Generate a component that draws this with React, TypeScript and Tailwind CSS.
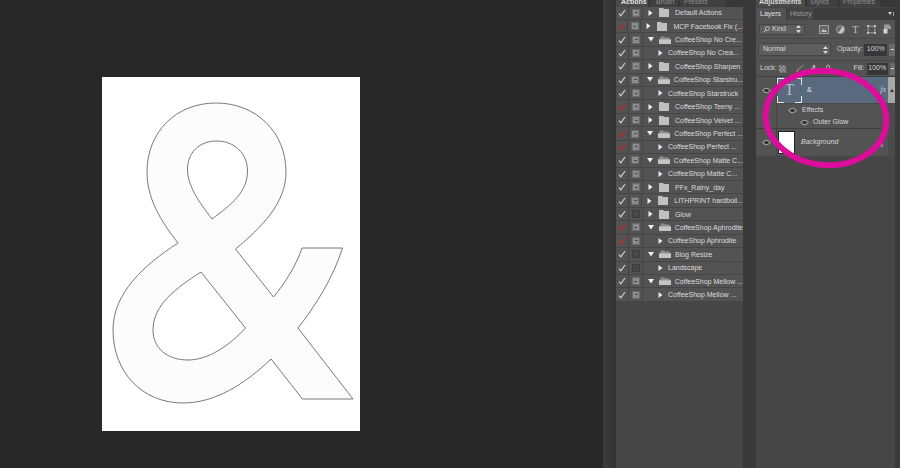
const actions = [
  { name: "Default Actions", kind: "closed" },
  { name: "MCP Facebook Fix (...", kind: "closed", red: true },
  { name: "CoffeeShop No Cre...", kind: "open" },
  { name: "CoffeeShop No Crea...", kind: "item" },
  { name: "CoffeeShop Sharpen", kind: "closed" },
  { name: "CoffeeShop Starstru...", kind: "open" },
  { name: "CoffeeShop Starstruck", kind: "item" },
  { name: "CoffeeShop Teeny ...", kind: "closed", red: true },
  { name: "CoffeeShop Velvet ...", kind: "closed" },
  { name: "CoffeeShop Perfect ...", kind: "open", red: true },
  { name: "CoffeeShop Perfect ...", kind: "item", red: true },
  { name: "CoffeeShop Matte C...", kind: "open" },
  { name: "CoffeeShop Matte C...", kind: "item" },
  { name: "PFx_Rainy_day", kind: "closed" },
  { name: "LITHPRINT hardboil...", kind: "closed" },
  { name: "Glow", kind: "closed", empty: true },
  { name: "CoffeeShop Aphrodite", kind: "open", red: true },
  { name: "CoffeeShop Aphrodite", kind: "item", red: true },
  { name: "Blog Resize", kind: "open", empty: true },
  { name: "Landscape", kind: "item", empty: true },
  { name: "CoffeeShop Mellow ...", kind: "open" },
  { name: "CoffeeShop Mellow ...", kind: "item" },
];

function CheckMark({ red }: { red?: boolean }) {
  return (
    <svg width="8" height="8" viewBox="0 0 8 8" fill="none">
      <path d="M1 4.6 L2.8 6.8 L7 1" stroke={red ? "#d8232a" : "#d6d6d6"} strokeWidth="1.1" />
    </svg>
  );
}

function Folder({ open }: { open: boolean }) {
  if (open) {
    return (
      <svg width="12" height="8" viewBox="0 0 12 8">
        <path d="M1.5 0.5 H5 L6 1.5 H10.5 V3 H1.5 Z" fill="#8f8f8f" />
        <path d="M0 3.2 H12 V8 H0 Z" fill="#c4c4c4" />
      </svg>
    );
  }
  return (
    <svg width="10" height="9" viewBox="0 0 10 9">
      <path d="M0 0 H4 L5 1 H10 V9 H0 Z" fill="#c0c0c0" />
    </svg>
  );
}

function Eye({ className }: { className?: string }) {
  return (
    <svg width="9" height="7" viewBox="0 0 9 7" className={className} fill="none">
      <path d="M0.5 3.5 Q4.5 -1 8.5 3.5 Q4.5 8 0.5 3.5 Z" stroke="#b4b4b4" strokeWidth="0.9" />
      <circle cx="4.5" cy="3.5" r="1.6" fill="#2f2f2f" />
    </svg>
  );
}

function MenuGlyph() {
  return (
    <svg width="6" height="4" viewBox="0 0 6 4">
      <path d="M0 0 H4 L2 3 Z" fill="#d0d0d0" />
      <path d="M5 0 H6 V4 H5 Z" fill="#9a9a9a" />
    </svg>
  );
}

function Stepper() {
  return (
    <svg width="5" height="8" viewBox="0 0 5 8">
      <path d="M2.5 0 L5 3 H0 Z M0 5 H5 L2.5 8 Z" fill="#d8d8d8" />
    </svg>
  );
}

function ActionRow({ a }: { a: (typeof actions)[number] }) {
  return (
    <div className="h-[13.43px] flex items-stretch bg-[#535353] border-b border-[#454545]">
      <div className="w-[13px] flex items-center justify-center border-r border-[#454545] mr-[1px]">
        <CheckMark red={a.red} />
      </div>
      <div className="w-[13px] flex items-center justify-center border-r border-[#454545]">
        {a.empty ? (
          <div className="w-[8px] h-[8px] bg-[#474747] border border-[#3d3d3d]" />
        ) : (
          <div className="w-[8px] h-[8px] bg-[#8c8c8c] border border-[#6a6a6a] flex items-center justify-center">
            <div className="w-[3px] h-[1px] bg-[#4c4c4c]" />
          </div>
        )}
      </div>
      {a.kind === "item" ? (
        <div className="flex items-center pl-[15px]">
          <svg width="5" height="6" viewBox="0 0 5 6" className="mr-[5px]">
            <path d="M0.5 0 L4.5 3 L0.5 6 Z" fill="#e8e8e8" />
          </svg>
          <span className="text-[7px] leading-none text-[#dcdcdc] whitespace-nowrap">{a.name}</span>
        </div>
      ) : (
        <div className="flex items-center pl-[5px]">
          <div className="w-[11px] flex items-center">
            {a.kind === "open" ? (
              <svg width="6" height="5" viewBox="0 0 6 5">
                <path d="M0 0 H6 L3 4.5 Z" fill="#efefef" />
              </svg>
            ) : (
              <svg width="5" height="6" viewBox="0 0 5 6">
                <path d="M0.5 0 L4.5 3 L0.5 6 Z" fill="#efefef" />
              </svg>
            )}
          </div>
          <div className="w-[16px] flex items-center">
            <Folder open={a.kind === "open"} />
          </div>
          <span className="text-[7px] leading-none text-[#dcdcdc] whitespace-nowrap">{a.name}</span>
        </div>
      )}
    </div>
  );
}

function LayersPanel() {
  return (
    <div className="w-[139px] h-full bg-[#464646] flex flex-col text-[#d8d8d8]">
      <div className="h-[7px] flex items-end overflow-hidden text-[7px] leading-none text-[#8f8f8f] bg-[#383838]">
        <div className="w-[49px] h-full bg-[#4a4a4a] flex items-end pl-[3px] pb-[2px] text-[#dcdcdc] font-bold">Adjustments</div>
        <div className="w-[31px] ml-[2px] h-full bg-[#404040] flex items-end pl-[3px] pb-[2px]">Styles</div>
        <div className="w-[40px] ml-[2px] h-full bg-[#404040] flex items-end pl-[3px] pb-[2px]">Properties</div>
      </div>
      <div className="h-[12px] mt-[1px] flex bg-[#3c3c3c] text-[7px] items-stretch">
        <div className="w-[30px] bg-[#535353] flex items-center pl-[4px] text-[#e0e0e0]">Layers</div>
        <div className="w-[27px] ml-[1px] bg-[#454545] flex items-center pl-[3px] text-[#9c9c9c]">History</div>
        <div className="flex-1 flex items-center justify-end pr-[1px]">
          <MenuGlyph />
        </div>
      </div>
      <div className="h-[57px] bg-[#535353] flex flex-col border-b border-[#3f3f3f]">
        <div className="h-[19px] flex items-center pl-[3px] border-b border-[#474747]">
          <div className="w-[46px] h-[11px] bg-[#5e5e5e] border border-[#454545] rounded-[1px] flex items-center px-[3px] gap-[2px]">
            <svg width="7" height="7" viewBox="0 0 7 7" fill="none">
              <circle cx="4.3" cy="2.7" r="2" stroke="#d0d0d0" strokeWidth="0.8" />
              <path d="M3 4 L0.8 6.2" stroke="#d0d0d0" strokeWidth="0.9" />
            </svg>
            <span className="text-[7px] flex-1">Kind</span>
            <Stepper />
          </div>
          <div className="flex items-center ml-[14px] gap-[7px]">
            <svg width="10" height="9" viewBox="0 0 10 9">
              <rect x="0.5" y="0.5" width="9" height="8" fill="#666" stroke="#b0b0b0" strokeWidth="0.8" />
              <path d="M2 7 L4 4 L5.5 5.5 L6.5 4.5 L8 7 Z" fill="#c8c8c8" />
            </svg>
            <svg width="9" height="9" viewBox="0 0 9 9">
              <circle cx="4.5" cy="4.5" r="4" fill="#6a6a6a" stroke="#b8b8b8" strokeWidth="0.7" />
              <path d="M6.5 1.2 A4 4 0 0 1 2.5 8 Z" fill="#c8c8c8" />
            </svg>
            <span className="text-[11px] leading-none font-['Liberation_Serif',serif] text-[#bcbcbc] w-[8px]">T</span>
            <svg width="9" height="9" viewBox="0 0 9 9" fill="none">
              <rect x="1.2" y="1.2" width="6.6" height="6.6" stroke="#a8a8a8" strokeWidth="0.9" />
              <path d="M0 0 H2 V2 H0 Z M7 0 H9 V2 H7 Z M0 7 H2 V9 H0 Z M7 7 H9 V9 H7 Z" fill="#c0c0c0" />
            </svg>
            <svg width="9" height="10" viewBox="0 0 9 10">
              <path d="M1 0.5 H6 L8 2.5 V5 H1 Z" fill="#9a9a9a" />
              <path d="M0.5 5 H4.5 V9.5 H0.5 Z" fill="#d4d4d4" />
            </svg>
          </div>
        </div>
        <div className="h-[22px] flex items-center pl-[2px] border-b border-[#474747]">
          <div className="w-[74px] h-[13px] bg-[#5e5e5e] border border-[#454545] rounded-[1px] flex items-center pl-[4px] pr-[2px] justify-between">
            <span className="text-[7px]">Normal</span>
            <Stepper />
          </div>
          <span className="text-[7px] ml-[6px] w-[28px]">Opacity:</span>
          <div className="w-[23px] h-[12px] bg-[#373737] flex items-center justify-center text-[7px]">100%</div>
          <div className="w-[6px] h-[12px] ml-[2px] bg-[#6a6a6a] flex items-center justify-center">
            <div className="w-[3px] h-[1px] bg-[#dddddd]" />
          </div>
        </div>
        <div className="flex-1 flex items-center pl-[4px]">
          <span className="text-[7px] w-[21px]">Lock:</span>
          <svg width="8" height="8" viewBox="0 0 8 8" className="mr-[9px]">
            <rect width="8" height="8" fill="#707070" />
            <path d="M0 0 H2 V2 H0 Z M4 0 H6 V2 H4 Z M2 2 H4 V4 H2 Z M6 2 H8 V4 H6 Z M0 4 H2 V6 H0 Z M4 4 H6 V6 H4 Z M2 6 H4 V8 H2 Z M6 6 H8 V8 H6 Z" fill="#999" />
          </svg>
          <svg width="10" height="9" viewBox="0 0 10 9" fill="none" className="mr-[6px]">
            <path d="M9.5 0.5 L3 6" stroke="#a0a0a0" strokeWidth="0.9" />
            <path d="M3 5.5 L1 8.5 L4 7 Z" fill="#b0b0b0" />
          </svg>
          <svg width="9" height="9" viewBox="0 0 9 9" className="mr-[7px]">
            <path d="M4.5 0 L6.5 2.5 H5.2 V4 H8 V6.5 H1 V4 H3.8 V2.5 H2.5 Z" fill="#c4c4c4" />
          </svg>
          <svg width="7" height="9" viewBox="0 0 7 9" fill="none">
            <path d="M1.8 4 V2.5 A1.7 1.7 0 0 1 5.2 2.5 V4" stroke="#c4c4c4" />
            <rect x="0.5" y="4" width="6" height="4.5" fill="#c4c4c4" />
          </svg>
          <span className="text-[7px] ml-[22px] w-[15px]">Fill:</span>
          <div className="w-[23px] h-[12px] bg-[#373737] flex items-center justify-center text-[7px]">100%</div>
          <div className="w-[6px] h-[12px] ml-[2px] bg-[#6a6a6a] flex items-center justify-center">
            <div className="w-[3px] h-[1px] bg-[#dddddd]" />
          </div>
        </div>
      </div>
      <div className="flex bg-[#535353] h-[79px]">
        <div className="w-[132px] flex flex-col">
          <div className="h-[26px] flex">
            <div className="w-[21px] flex items-center justify-center border-r border-[#454545]">
              <Eye />
            </div>
            <div className="flex-1 bg-[#5a6a7e] flex items-center">
              <div className="w-[25px] h-[25px] relative flex items-center justify-center">
                <div className="absolute left-0 top-0 w-[7px] h-[7px] border-l border-t border-[#e6e6e6]" />
                <div className="absolute right-0 top-0 w-[7px] h-[7px] border-r border-t border-[#e6e6e6]" />
                <div className="absolute left-0 bottom-0 w-[7px] h-[7px] border-l border-b border-[#e6e6e6]" />
                <div className="absolute right-0 bottom-0 w-[7px] h-[7px] border-r border-b border-[#e6e6e6]" />
                <span className="text-[16px] leading-none font-['Liberation_Serif',serif] text-[#b8bec8]">T</span>
              </div>
              <span className="text-[7px] ml-[5px] flex-1 text-[#e6e6e6]">&amp;</span>
              <span className="text-[8px] italic font-['Liberation_Serif',serif] pr-[2px] text-[#cfcfcf]">fx</span>
            </div>
          </div>
          <div className="h-[13px] flex items-center border-t border-[#4a4a4a]">
            <div className="w-[21px] h-full border-r border-[#454545]" />
            <Eye className="ml-[11px]" />
            <span className="text-[7px] ml-[5px]">Effects</span>
          </div>
          <div className="h-[13px] flex items-center border-b border-[#3f3f3f]">
            <div className="w-[21px] h-full border-r border-[#454545]" />
            <Eye className="ml-[23px]" />
            <span className="text-[7px] ml-[4px]">Outer Glow</span>
          </div>
          <div className="flex-1 flex items-center">
            <div className="w-[21px] h-full flex items-center justify-center border-r border-[#454545]">
              <Eye />
            </div>
            <div className="w-[17px] h-[23px] ml-[1px] bg-white border border-[#222222]" />
            <span className="text-[7px] italic ml-[6px] flex-1">Background</span>
            <svg width="7" height="8" viewBox="0 0 7 8" className="mr-[5px]">
              <path d="M1.8 3.5 V2.3 A1.7 1.7 0 0 1 5.2 2.3 V3.5 H7 V8 H0 V3.5 Z" fill="#8a8a8a" />
            </svg>
          </div>
        </div>
        <div className="w-[7px] flex flex-col bg-[#4b4b4b]">
          <div className="h-[26px] bg-[#a8a8a8] flex items-center justify-center">
            <div className="w-0 h-0 border-x-[2px] border-x-transparent border-b-[3px] border-b-[#333333]" />
          </div>
        </div>
      </div>
    </div>
  );
}

export default function App() {
  return (
    <div className="w-[900px] h-[468px] flex relative overflow-hidden bg-[#282828] font-['Liberation_Sans',Arial,sans-serif]">
      <div className="w-[603px] h-full pl-[102px] pt-[77px]">
        <div className="w-[258px] h-[354px] bg-white">
          {/* viewBox uses page coords of the canvas */}
          <svg width="258" height="354" viewBox="102 77 258 354">
            <path
              fillRule="evenodd"
              d="M216 103 C256 103 286 132 286 172 C286 203 262 227 235.5 249 L273.5 297 C285 283 296 266 302 248 L342.5 248 C333 278 316 305 298 328 L353 399 L302.5 399 L271 359 C245 384 215 403 183 403 C142 403 113 372 113 330 C113 293 144 265 178 243 C160 220 147 198 147 172 C147 132 176 103 216 103 Z M216.5 141 C199 141 187.5 153 187.5 169 C187.5 185 198 201 212 219 C231 205 247.5 192 247.5 171 C247.5 153 234 141 216.5 141 Z M201 272 C176 288 153 305 153 330 C153 348 167 360 188 360 C208 360 229 346 245.5 328 Z"
              fill="#fcfcfc"
              stroke="#6a6a6a"
              strokeWidth="0.9"
            />
          </svg>
        </div>
      </div>
      <div className="w-[13px] h-full bg-gradient-to-r from-[#3c3c3c] to-[#333333]" />
      <div className="w-[127px] h-full bg-[#464646] flex flex-col">
        <div className="h-[6.5px] flex items-end overflow-hidden text-[7px] leading-none text-[#8f8f8f] bg-[#383838]">
          <div className="w-[32px] h-full bg-[#4a4a4a] flex items-end pl-[5px] pb-[2px] text-[#e4e4e4] font-bold">Actions</div>
          <div className="w-[27px] ml-[3px] h-full bg-[#404040] flex items-end pl-[5px] pb-[2px]">Brush</div>
          <div className="w-[46px] ml-[2px] h-full bg-[#404040] flex items-end pl-[4px] pb-[2px]">Brush Presets</div>
        </div>
        {actions.map((a, i) => (
          <ActionRow key={i} a={a} />
        ))}
      </div>
      <div className="w-[13px] h-full bg-[#393939]" />
      <LayersPanel />
      <div className="w-[5px] h-full bg-[#3a3a3a]" />
      {/* hand-drawn circle on top of the layers panel */}
      <svg width="140" height="112" viewBox="0 0 140 112" className="absolute left-[756px] top-[62px]" fill="none">
        <ellipse cx="70" cy="56" rx="60.5" ry="47" transform="rotate(6 70 56)" stroke="#dc0d9b" strokeWidth="6" />
      </svg>
    </div>
  );
}
